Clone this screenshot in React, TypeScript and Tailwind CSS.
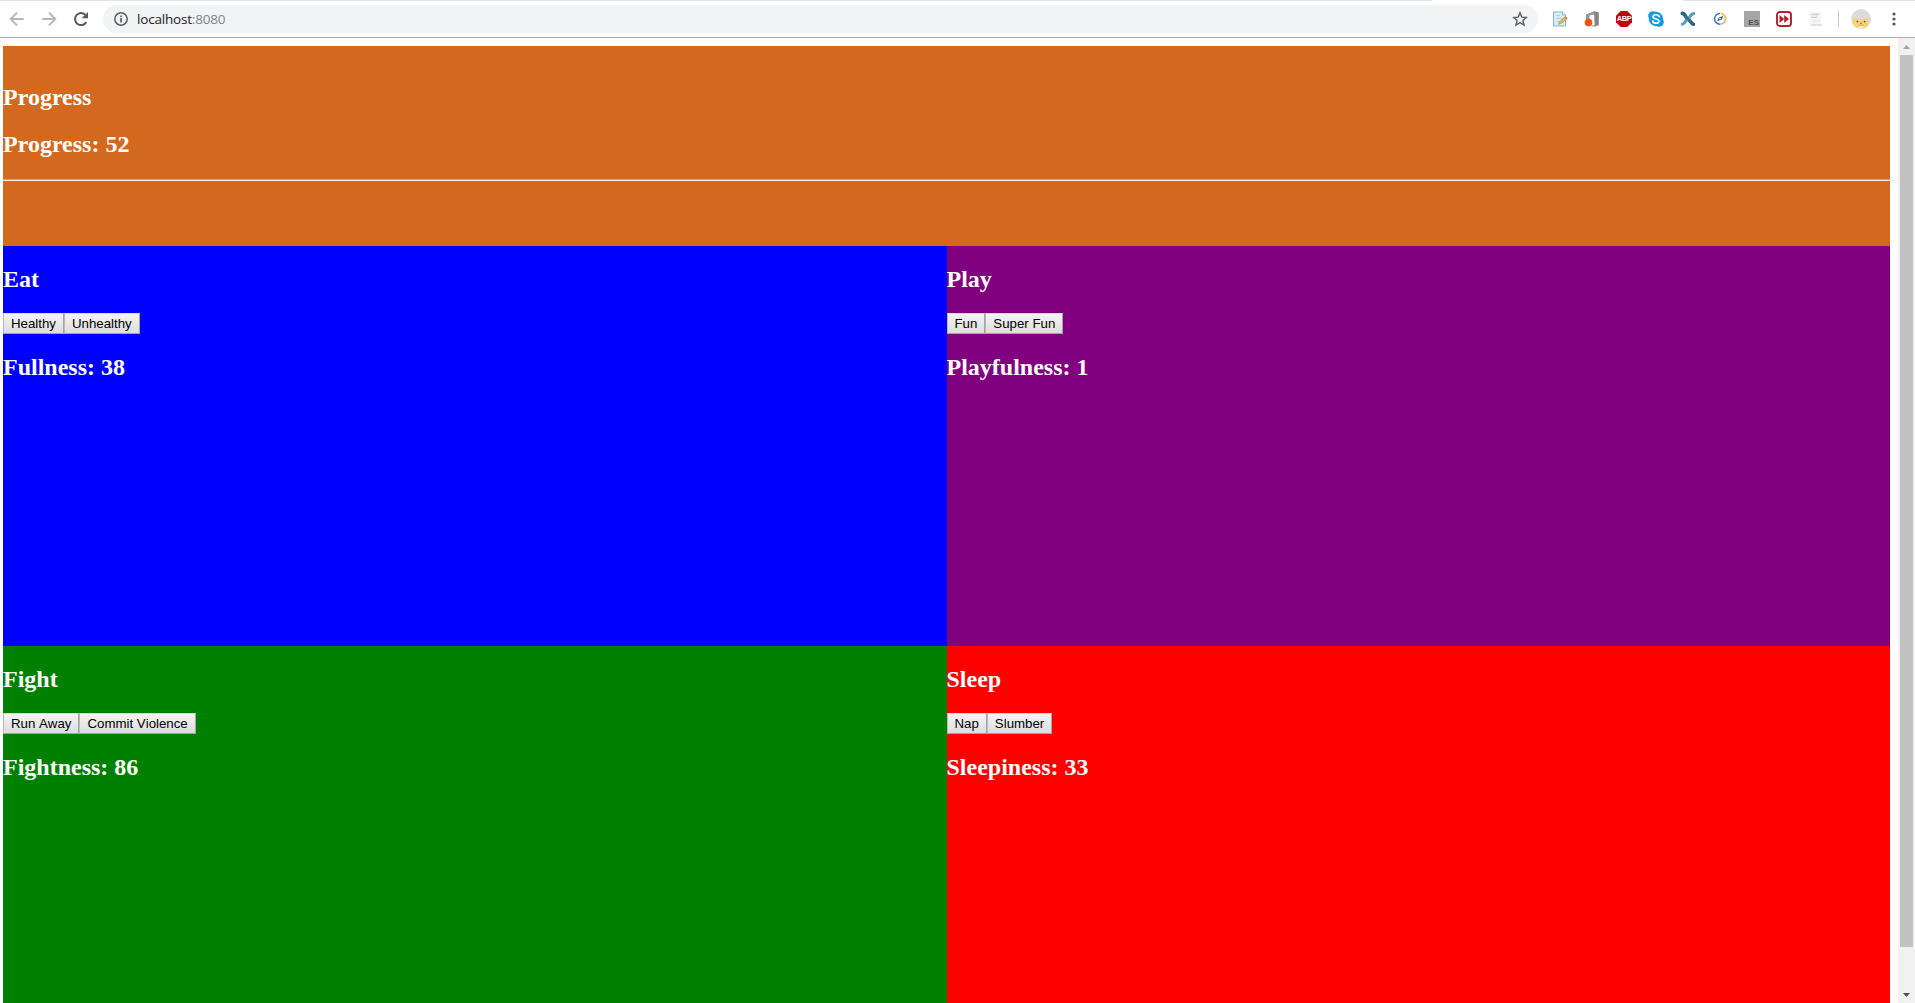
import React from "react";

function NavIcons() {
  return (
    <div className="flex items-center">
      <svg className="ml-2 h-[18px] w-[18px]" viewBox="0 0 18 18" fill="none" stroke="#b4b6b9" strokeWidth="1.9">
        <path d="M15.7 9H3M9 2.7 2.7 9 9 15.3" />
      </svg>
      <svg className="ml-[14px] h-[18px] w-[18px]" viewBox="0 0 18 18" fill="none" stroke="#b4b6b9" strokeWidth="1.9">
        <path d="M2.3 9H15M9 2.7 15.3 9 9 15.3" />
      </svg>
      <svg className="ml-[14px] h-[18px] w-[18px]" viewBox="0 0 18 18">
        <path d="M14.3 12A6 6 0 1 1 13.4 4.9" fill="none" stroke="#55585c" strokeWidth="2" />
        <path d="M16 2v6.3H9.7z" fill="#55585c" />
      </svg>
    </div>
  );
}

function AddressBar() {
  return (
    <div className="ml-[13px] flex h-7 w-[1435px] items-center rounded-full bg-[#f1f3f4]">
      <svg className="ml-[10px] h-4 w-4" viewBox="0 0 16 16">
        <circle cx="8" cy="8" r="6.2" fill="none" stroke="#5b5e63" strokeWidth="1.5" />
        <path d="M7.2 7.1h1.7v4.3H7.2zM7.2 4.4h1.7V6H7.2z" fill="#5b5e63" />
      </svg>
      <span className="ml-2 whitespace-nowrap font-['Open_Sans',sans-serif] text-[13.5px] leading-5 tracking-[-0.19px] text-[#202124]">
        localhost<span className="text-[#80868b]">:8080</span>
      </span>
      <svg className="mr-[10px] ml-auto h-4 w-4" viewBox="0 0 16 16">
        <path
          d="m8 1.9 1.8 4.2 4.6.4-3.5 3 1.1 4.5L8 11.6 4 14l1.1-4.5-3.5-3 4.6-.4z"
          fill="none"
          stroke="#5b5e63"
          strokeWidth="1.4"
        />
      </svg>
    </div>
  );
}

function Extensions() {
  return (
    <div className="ml-[14px] flex items-center gap-4 font-['Liberation_Sans',sans-serif]">
      <svg className="h-4 w-4" viewBox="0 0 16 16">
        <path d="M1.5 1h9l3 3v11h-12z" fill="#d7edf9" stroke="#88b6d2" />
        <path d="M10.5 1v3h3" fill="#fff" stroke="#88b6d2" />
        <path d="M4 4.5h4M4 7.5h7M4 10.5h4" stroke="#b4d6e8" />
        <path d="m6.5 13.5 1-3 6-5 1.8 2-6 5z" fill="#e7b64c" stroke="#b98b44" strokeWidth=".6" />
        <path d="m12.3 6.5 1.2-1 1.8 2-1.2 1z" fill="#d47c6a" />
      </svg>
      <svg className="h-4 w-4" viewBox="0 0 16 16">
        <path d="M2 3.6 10 .3h1v2.9L5.5 4.5V9L2 10z" fill="#969696" />
        <path d="M10 .3 14.8 1.6v12.6L10 15.8l-3.5-1.3 4.2.1z" fill="#848484" />
        <circle cx="4.5" cy="11.5" r="3.8" fill="#f4510b" />
      </svg>
      <div className="relative h-4 w-4">
        <svg className="h-4 w-4" viewBox="0 0 16 16">
          <path d="M4.7 0h6.6L16 4.7v6.6L11.3 16H4.7L0 11.3V4.7z" fill="#c4000b" />
        </svg>
        <span className="absolute inset-0 flex items-center justify-center text-[7.5px] leading-4 font-bold tracking-[-0.5px] text-white">
          ABP
        </span>
      </div>
      <svg className="h-4 w-4" viewBox="0 0 16 16">
        <circle cx="5" cy="5" r="4.8" fill="#159cdd" />
        <circle cx="11" cy="11" r="4.8" fill="#159cdd" />
        <circle cx="8" cy="8" r="7.2" fill="#159cdd" />
        <path d="M11.1 5.6C10.7 3.2 5 3 5 5.8c0 2.9 6 1.5 6 4.3 0 2.9-5.9 2.7-6.1 0" fill="none" stroke="#fff" strokeWidth="1.7" strokeLinecap="round" />
      </svg>
      <svg className="h-4 w-4" viewBox="0 0 16 16" fill="none" strokeLinecap="round">
        <path d="M2.2 2.4C5.7 2.6 5.3 7 7.8 8s2.8 4.4 5.6 5.2" stroke="#2c6484" strokeWidth="3.6" />
        <path d="M13.6 2.6c-3.5.2-3.3 4.4-5.8 5.4s-2 4.4-5.4 5.2" stroke="#5b9fbe" strokeWidth="3.2" />
        <path d="m6 6 4 4" stroke="#376f8c" strokeWidth="2.5" />
      </svg>
      <svg className="h-4 w-4" viewBox="0 0 16 16" fill="none">
        <path d="M8 13.2A5.3 5.3 0 0 1 8 2.4" stroke="#3678c4" strokeWidth="1.5" />
        <path d="M8.8 2.4a5.4 5.4 0 0 1 3.6 8.7" stroke="#edbd45" strokeWidth="1.6" />
        <path d="M12.4 11.1A5.3 5.3 0 0 1 8 13.2" stroke="#7da9d8" strokeWidth="1.3" />
        <path d="m5.3 10 1.5-3.6L11.3 5 9.7 8.8z" fill="#3e5168" />
        <circle cx="8" cy="7.6" r=".9" fill="#fff" />
      </svg>
      <div className="flex h-4 w-4 items-end justify-end bg-[#a5a5a5] pr-px text-[8px] leading-[9px] font-bold text-[#505050]">
        ES
      </div>
      <svg className="h-4 w-4" viewBox="0 0 16 16">
        <rect x="1" y="1" width="14" height="14" rx="2.8" fill="#fff" stroke="#b51f2b" strokeWidth="1.9" />
        <path d="m3.5 4 4.8 4-4.8 4zM8.2 4l4.8 4-4.8 4z" fill="#b51f2b" />
      </svg>
      <svg className="h-4 w-4" viewBox="0 0 16 16">
        <path d="M2 1h11v14H2z" fill="#f3f5f5" />
        <path d="M2.5 3.5h8M7 3h4M3 6.5h6M3 14h11" stroke="#ccd0d0" strokeWidth="1.2" />
        <path d="M3 5h7M4 10h8" stroke="#e6e9e9" />
      </svg>
    </div>
  );
}

function Profile() {
  return (
    <div className="flex items-center">
      <div className="ml-[14px] h-4 w-px bg-[#c8cacc]" />
      <svg className="ml-3 h-5 w-5" viewBox="0 0 20 20">
        <circle cx="10" cy="10" r="10" fill="#dcdcdc" />
        <path d="M2.2 8.2 5.5 10h9l3.3-1.8.8 5.7A10 10 0 0 1 10 19.8 9.8 9.8 0 0 1 1.5 14z" fill="#f6d477" />
        <path d="M10 15c-2.2 0-2.7 4-1.8 4.8h3.6C12.7 19 12.2 15 10 15z" fill="#fff0bd" />
        <circle cx="6.4" cy="12.6" r=".9" fill="#614c2e" />
        <circle cx="13.6" cy="12.6" r=".9" fill="#614c2e" />
        <path d="m9.1 14 .9 1 .9-1zM7.7 16c1 .7 1.8.7 2.3-.5.5 1.2 1.3 1.2 2.3.5" fill="none" stroke="#b67738" strokeWidth=".7" />
      </svg>
      <svg className="ml-[15px] h-4 w-4" viewBox="0 0 16 16" fill="#55585c">
        <circle cx="8" cy="3" r="1.6" />
        <circle cx="8" cy="8" r="1.6" />
        <circle cx="8" cy="13" r="1.6" />
      </svg>
    </div>
  );
}

function BrowserToolbar() {
  return (
    <header className="h-[38px] shrink-0 border-b border-[#b0abaa] bg-white">
      <div className="flex justify-between">
        <div className="h-px w-[1432px] bg-[#e2e4e6]" />
        <div className="h-px w-[232px] bg-[#e2e4e6]" />
      </div>
      <div className="flex h-9 items-center">
        <NavIcons />
        <AddressBar />
        <Extensions />
        <Profile />
      </div>
    </header>
  );
}

function Heading({ children }: { children: React.ReactNode }) {
  return <h2 className="text-2xl leading-[27px] font-bold">{children}</h2>;
}

function ActionButton({ label }: { label: string }) {
  return (
    <button className="h-[21px] border border-t-[#d8d8d8] border-r-[#a3a3a3] border-b-[#a3a3a3] border-l-[#b8b8b8] bg-linear-to-b from-[#f4f4f4] to-[#dddddd] px-[7px] font-['Liberation_Sans',Arial,sans-serif] text-[13.28px] leading-[17px] whitespace-nowrap text-black [font-kerning:none]">
      {label}
    </button>
  );
}

type PanelProps = { title: string; actions: string[]; stat: string; value: number; color: string };

function Panel({ title, actions, stat, value, color }: PanelProps) {
  return (
    <section className={`h-[400px] pt-5 ${color}`}>
      <Heading>{title}</Heading>
      <div className="my-5 flex">
        {actions.map((a) => (
          <ActionButton key={a} label={a} />
        ))}
      </div>
      <Heading>
        {stat}: {value}
      </Heading>
    </section>
  );
}

const panels: PanelProps[] = [
  { title: "Eat", actions: ["Healthy", "Unhealthy"], stat: "Fullness", value: 38, color: "bg-[#0000ff]" },
  { title: "Play", actions: ["Fun", "Super Fun"], stat: "Playfulness", value: 1, color: "bg-[#800080]" },
  { title: "Fight", actions: ["Run Away", "Commit Violence"], stat: "Fightness", value: 86, color: "bg-[#008000]" },
  { title: "Sleep", actions: ["Nap", "Slumber"], stat: "Sleepiness", value: 33, color: "bg-[#ff0000]" },
];

function Scrollbar() {
  return (
    <div className="flex w-[17px] shrink-0 flex-col items-center bg-[#f1f1f1]">
      <div className="flex h-[17px] shrink-0 items-center">
        <svg className="h-1 w-[7px]" viewBox="0 0 7 4"><path d="M0 4 3.5 0 7 4z" fill="#a3a3a3" /></svg>
      </div>
      <div className="h-[892px] w-[13px] bg-[#c1c1c1]" />
      <div className="mt-auto flex h-[17px] shrink-0 items-center">
        <svg className="h-1 w-[7px]" viewBox="0 0 7 4"><path d="M0 0 3.5 4 7 0z" fill="#505050" /></svg>
      </div>
    </div>
  );
}

export default function App() {
  return (
    <div className="flex h-screen flex-col overflow-hidden bg-white">
      <BrowserToolbar />
      <div className="flex min-h-0 flex-1">
        <main className="mr-2 ml-[3px] flex-1 overflow-hidden pt-2 font-['Liberation_Serif','Times_New_Roman',serif] text-white">
          <section className="h-[200px] bg-[#d2691e] pt-[38px]">
            <Heading>Progress</Heading>
            <div className="mt-5">
              <Heading>Progress: 52</Heading>
            </div>
            <hr className="mt-[21px] h-0.5 border-t border-b border-t-[#b5a79c] border-b-[#f3f0ec]" />
          </section>
          <div className="grid grid-cols-2">
            {panels.map((p) => (
              <Panel key={p.title} {...p} />
            ))}
          </div>
        </main>
        <Scrollbar />
      </div>
    </div>
  );
}
